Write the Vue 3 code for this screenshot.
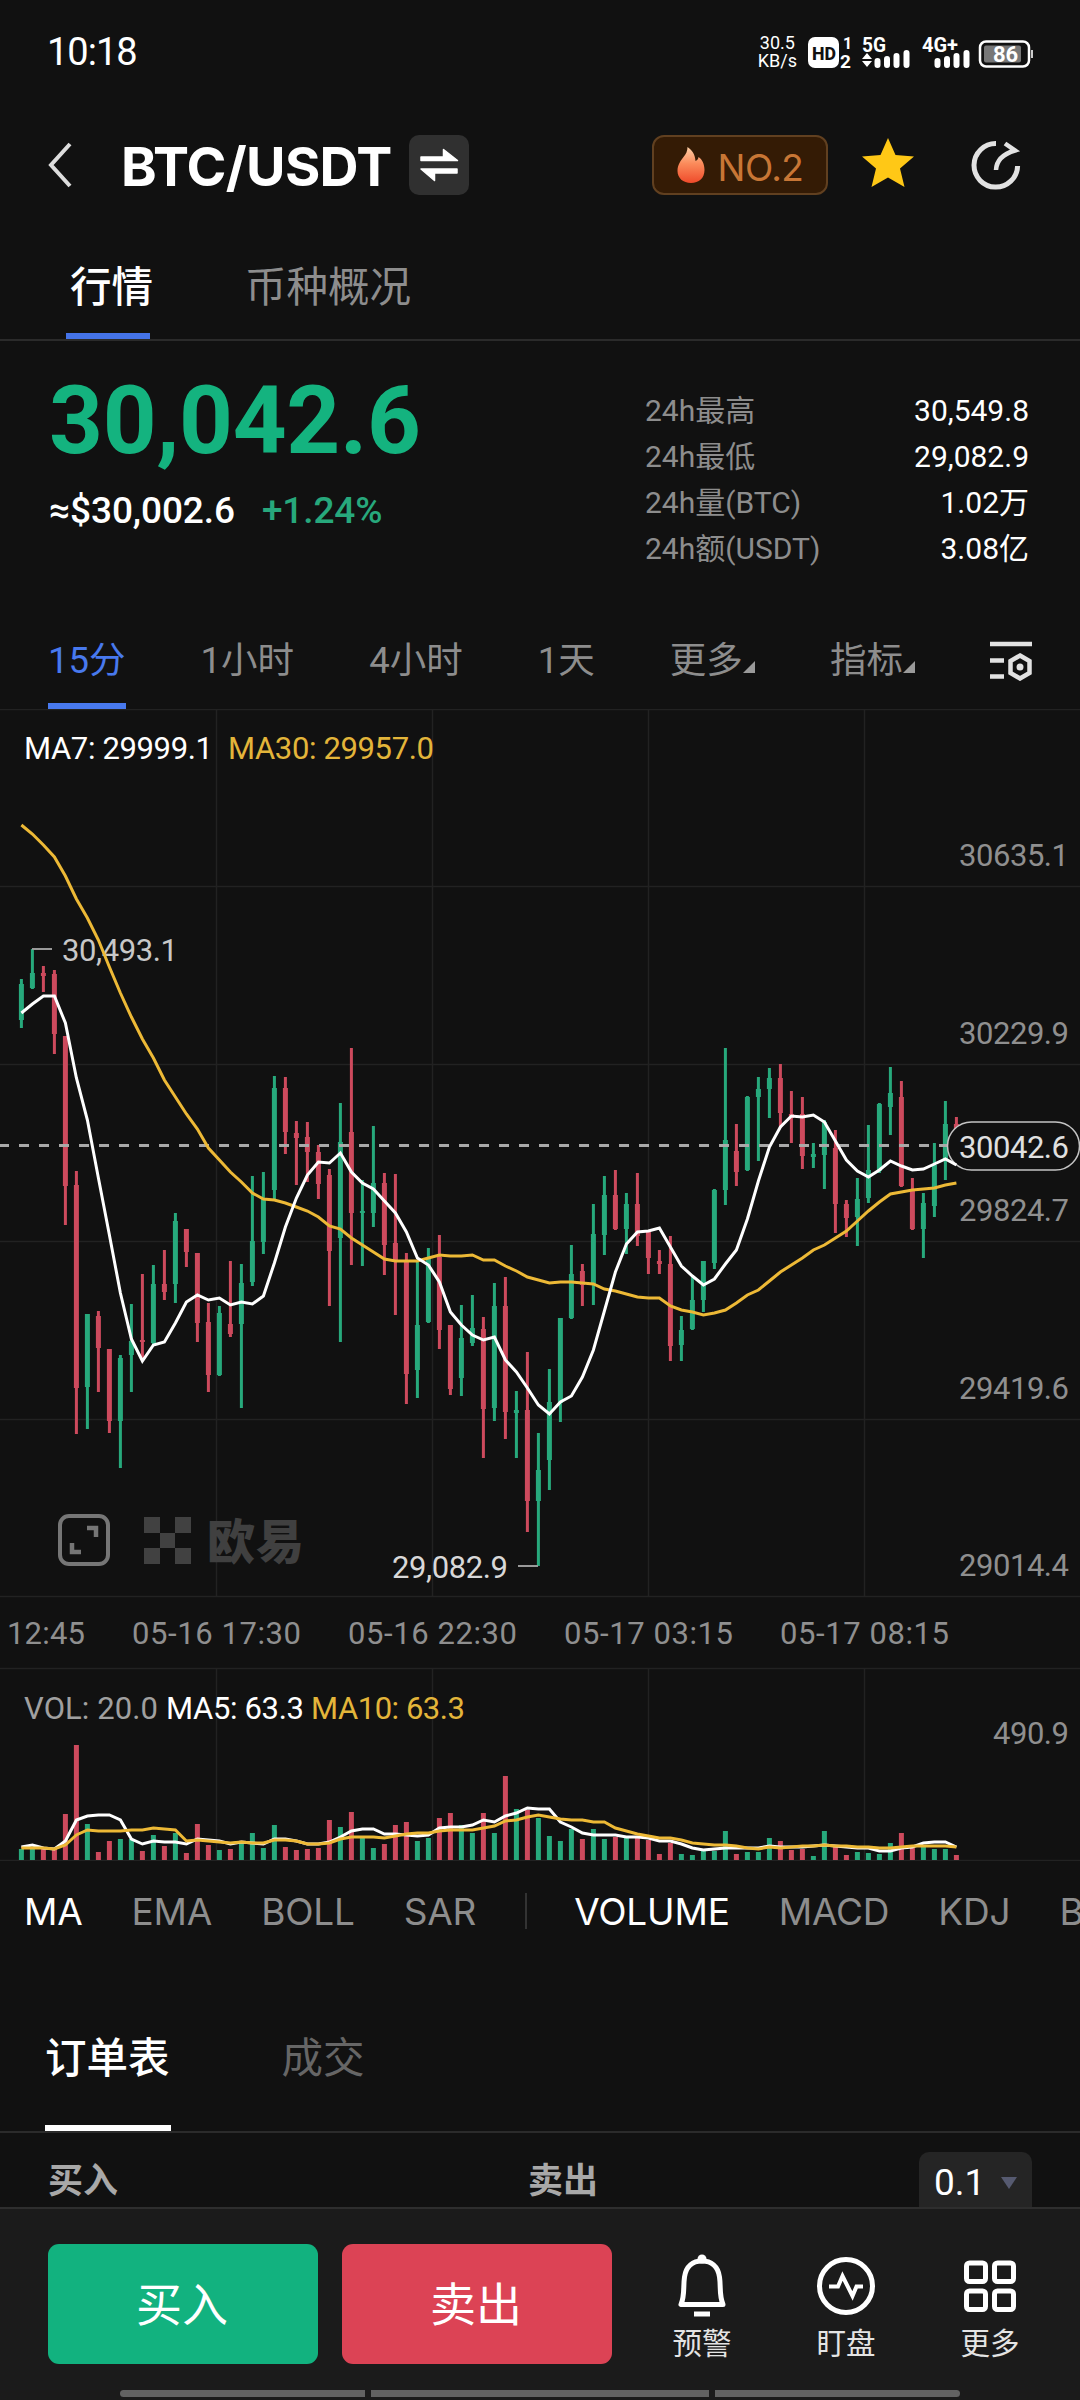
<template>
  <div class="page">
    <div class="status">
      <span class="clock">10:18</span>
      <div class="status-right">
        <div class="speed"><span>30.5</span><span>KB/s</span></div>
        <svg class="status-icons" width="234" height="36" viewBox="0 0 234 36">
          <rect x="0" y="3" width="31" height="31" rx="7" fill="#fff" />
          <text x="4" y="26" class="hd" textLength="24" lengthAdjust="spacingAndGlyphs">HD</text>
          <text x="35" y="15" class="sim" font-size="16">1</text>
          <text x="32" y="33.500" class="sim" font-size="19">2</text>
          <text x="54" y="18" class="net" textLength="24" lengthAdjust="spacingAndGlyphs">5G</text>
          <path d="M59 19l5 6h-10zM59 33l5-6h-10z" fill="#fff" />
          <path d="M69.500 31v-4M79 31v-6M88.500 31v-9M98.500 31v-12" class="bars" />
          <text x="114" y="18" class="net" textLength="36" lengthAdjust="spacingAndGlyphs">4G+</text>
          <path d="M129.500 31v-4M139 31v-6M148.500 31v-9M158.500 31v-12" class="bars" />
          <rect x="172" y="7.500" width="49" height="25" rx="6" fill="none" stroke="#fff" stroke-width="2.500" />
          <rect x="176" y="11.500" width="37" height="17" rx="2" fill="#777" />
          <rect x="223" y="16" width="2" height="8" fill="#ccc" />
          <text x="185" y="28" class="battery" textLength="25">86</text>
        </svg>
      </div>
    </div>

    <header class="header">
      <svg class="back" width="26" height="46" viewBox="0 0 26 46">
        <path d="M23 2L4 23L23 44" fill="none" stroke="#ddd" stroke-width="4" />
      </svg>
      <h1>BTC/USDT</h1>
      <div class="swap">
        <svg width="60" height="60" viewBox="0 0 60 60">
          <path
            d="M12 22H34.500V14.500L48.500 25.500H12ZM48 34H12L25.500 45.500V38H48Z"
            fill="#fff"
            stroke="#fff"
            stroke-width="1.500"
            stroke-linejoin="round"
          />
        </svg>
      </div>
      <div class="rank">
        <svg width="28" height="38" viewBox="0 0 28 38">
          <defs>
            <linearGradient id="fire" x1="0" y1="0" x2="0" y2="1">
              <stop offset="0" stop-color="#ffd0a8" />
              <stop offset="0.450" stop-color="#fb8c5c" />
              <stop offset="1" stop-color="#ef4a2a" />
            </linearGradient>
          </defs>
          <path
            d="M10.500 1C15 4 18 8 18.500 15C20.500 14 21.500 12.500 21.500 11C25 13 27.500 18 27.500 24C27.500 32 22 37 14 37C6 37 0.500 32 0.500 25C0.500 19 3.500 15 6.500 11C9 8 10.500 5 10.500 1Z"
            fill="url(#fire)"
          />
        </svg>
        <span>NO.2</span>
      </div>
      <svg class="star" width="52" height="50" viewBox="0 0 52 50">
        <path d="M26 0L33.500 17L52 18.500L38 30.500L42.500 49L26 39.500L9.500 49L14 30.500L0 18.500L18.500 17Z" fill="#ffc816" />
      </svg>
      <svg class="share" width="50" height="50" viewBox="0 0 50 50">
        <path d="M25 3.500A21.800 21.800 0 1 0 46.600 26" fill="none" stroke="#e2e2e2" stroke-width="5" />
        <path d="M25 30C25.500 20 32 14 44 10.500L34 3.500" fill="none" stroke="#e2e2e2" stroke-width="4.500" />
      </svg>
    </header>

    <nav class="tabs">
      <span class="active">行情</span>
      <span>币种概况</span>
    </nav>

    <section class="quote">
      <div>
        <div class="price">30,042.6</div>
        <div class="sub">
          <span>≈$30,002.6</span>
          <span class="change">+1.24%</span>
        </div>
      </div>
      <div class="stats">
        <div v-for="s in stats" :key="s.label" class="stat">
          <span class="label">{{ s.label }}</span>
          <span>{{ s.value }}</span>
        </div>
      </div>
    </section>

    <nav class="periods">
      <span v-for="(p, i) in periods" :key="p.name" :class="{ active: i === 0 }">
        {{ p.name }}<i v-if="p.menu" class="corner"></i>
      </span>
      <svg width="42" height="40" viewBox="0 0 42 40">
        <path d="M0 3H42M0 19.500H14M0 35.500H14" stroke="#e2e2e2" stroke-width="4.500" />
        <path d="M30 14.500L39.500 20V32L30 37.500L20.500 32V20Z" fill="none" stroke="#e2e2e2" stroke-width="4.500" />
        <circle cx="30" cy="26" r="3.500" fill="#e2e2e2" />
      </svg>
    </nav>

    <svg class="chart" width="1080" height="1152" viewBox="0 709 1080 1152">
      <g class="grid">
        <path v-for="y in gridY" :key="y" :d="`M0 ${y}H1080`" />
        <path v-for="x in gridX" :key="x" :d="`M${x} 710V1596M${x} 1669V1860`" />
      </g>

      <!-- watermark and expand button -->
      <rect x="60" y="1516" width="48" height="48" rx="9" fill="none" stroke="#767676" stroke-width="4" />
      <path d="M87 1528H96V1537M72 1543V1552H81" fill="none" stroke="#767676" stroke-width="4.500" />
      <path d="M144 1517h16v16h-16zM175 1517h16v16h-16zM160 1533h15v15h-15zM144 1548h16v16h-16zM175 1548h16v16h-16z" fill="#414141" />
      <text x="207" y="1559" class="brand" textLength="97">欧易</text>

      <g v-for="(c, i) in candles" :key="i" :fill="c[0] ? '#27a97c' : '#cd4a5d'">
        <rect :x="cx(i) - 1.5" :y="c[1]" width="3" :height="c[4] - c[1]" />
        <rect :x="cx(i) - 2.5" :y="c[2]" width="5" :height="c[3] - c[2]" />
        <rect :x="cx(i) - 2.5" :y="1860 - volumes[i]" width="5" :height="volumes[i]" />
      </g>

      <path d="M32 949H52M518 1566H538" stroke="#999" stroke-width="2" />
      <text x="62" y="960.500" fill="#c8c8c8" textLength="116">30,493.1</text>
      <text x="392" y="1577.500" fill="#d8d8d8" textLength="116">29,082.9</text>

      <path d="M-1 1145.500H950" stroke="#a9a9a9" stroke-width="3" stroke-dasharray="10 10" />
      <rect x="947.500" y="1122" width="132" height="48" rx="24" fill="#111" stroke="#c4c4c4" stroke-width="1.500" />

      <polyline :points="line(ma30)" class="ma yellow" />
      <polyline :points="line(ma7)" class="ma" />
      <polyline :points="volLine(volMa5)" class="ma" />
      <polyline :points="volLine(volMa10)" class="ma yellow" />

      <text
        v-for="t in chartTexts"
        :key="t.text"
        :x="t.x"
        :y="t.y"
        :textLength="t.w"
        :fill="t.color"
      >{{ t.text }}</text>
    </svg>

    <nav class="indicators">
      <span class="on">MA</span>
      <span>EMA</span>
      <span>BOLL</span>
      <span>SAR</span>
      <i></i>
      <span class="on">VOLUME</span>
      <span>MACD</span>
      <span>KDJ</span>
      <span>B</span>
    </nav>

    <nav class="book-tabs">
      <span class="active">订单表</span>
      <span>成交</span>
    </nav>

    <div class="book-head">
      <span>买入</span>
      <span>卖出</span>
      <div class="step">0.1<i></i></div>
    </div>

    <footer class="footer">
      <div class="actions">
        <button class="buy">买入</button>
        <button class="sell">卖出</button>
        <div class="tools">
          <div class="tool">
            <svg width="64" height="64" viewBox="0 0 64 64">
              <circle cx="32" cy="6" r="4.500" fill="#fff" />
              <path d="M11 51.500H53C49 42 51 34 49.500 24C48 13 41 8 32 8C23 8 16 13 14.500 24C13 34 15 42 11 51.500Z" class="stroke" />
              <path d="M24 61H40" class="stroke" />
            </svg>
            <span>预警</span>
          </div>
          <div class="tool">
            <svg width="64" height="64" viewBox="0 0 64 64">
              <circle cx="32" cy="33" r="26.500" class="stroke" />
              <path d="M15 33.500H24L28.500 23L38.500 43L42.500 33.500H49" class="stroke thin" />
            </svg>
            <span>盯盘</span>
          </div>
          <div class="tool">
            <svg width="64" height="64" viewBox="0 0 64 64">
              <rect x="8.500" y="10" width="19" height="18.500" rx="3" class="stroke" />
              <rect x="36.500" y="10" width="19" height="18.500" rx="3" class="stroke" />
              <rect x="8.500" y="38" width="19" height="18.500" rx="3" class="stroke" />
              <rect x="36.500" y="38" width="19" height="18.500" rx="3" class="stroke" />
            </svg>
            <span>更多</span>
          </div>
        </div>
      </div>
      <div class="gesture"><i></i><i></i><i></i></div>
    </footer>
  </div>
</template>

<script setup>
const stats = [
  { label: "24h最高", value: "30,549.8" },
  { label: "24h最低", value: "29,082.9" },
  { label: "24h量(BTC)", value: "1.02万" },
  { label: "24h额(USDT)", value: "3.08亿" },
];

const periods = [
  { name: "15分" },
  { name: "1小时" },
  { name: "4小时" },
  { name: "1天" },
  { name: "更多", menu: true },
  { name: "指标", menu: true },
];

const gridY = [709.5, 886.5, 1064.5, 1241.5, 1419.5, 1596.5, 1668.5, 1860.5];
const gridX = [216.5, 432.5, 648.5, 864.5];

// up flag, high, body top, body bottom, low
const candles = [
  [1, 979, 984, 1020, 1028], [1, 949, 973, 988, 989], [0, 966, 973, 976, 992], [0, 970, 974, 1034, 1054],
  [0, 1036, 1036, 1186, 1225], [0, 1171, 1185, 1388, 1434], [1, 1314, 1314, 1387, 1429], [0, 1311, 1316, 1348, 1392],
  [0, 1349, 1349, 1421, 1433], [1, 1355, 1358, 1421, 1468], [1, 1304, 1341, 1355, 1392], [0, 1274, 1340, 1342, 1360],
  [1, 1265, 1284, 1343, 1345], [0, 1250, 1284, 1292, 1300], [1, 1213, 1221, 1284, 1303], [0, 1229, 1229, 1252, 1267],
  [0, 1253, 1253, 1323, 1342], [0, 1303, 1322, 1375, 1392], [1, 1306, 1313, 1375, 1376], [0, 1261, 1324, 1334, 1337],
  [1, 1264, 1283, 1324, 1408], [1, 1176, 1241, 1282, 1286], [1, 1172, 1199, 1242, 1254], [1, 1076, 1088, 1190, 1199],
  [0, 1077, 1088, 1132, 1154], [0, 1121, 1133, 1138, 1185], [0, 1122, 1137, 1152, 1182], [0, 1145, 1152, 1184, 1199],
  [0, 1169, 1175, 1251, 1306], [1, 1103, 1142, 1238, 1342], [0, 1048, 1132, 1213, 1265], [1, 1180, 1211, 1213, 1266],
  [1, 1126, 1183, 1213, 1227], [0, 1173, 1183, 1245, 1275], [0, 1174, 1243, 1261, 1315], [0, 1253, 1260, 1374, 1404],
  [1, 1260, 1325, 1370, 1398], [1, 1248, 1259, 1322, 1323], [0, 1235, 1257, 1330, 1349], [0, 1325, 1325, 1389, 1395],
  [1, 1305, 1338, 1378, 1396], [1, 1295, 1328, 1343, 1346], [0, 1317, 1329, 1409, 1458], [1, 1283, 1306, 1408, 1421],
  [0, 1277, 1306, 1412, 1439], [1, 1391, 1410, 1413, 1458], [0, 1352, 1410, 1501, 1532], [1, 1433, 1470, 1501, 1566],
  [1, 1369, 1402, 1460, 1490], [1, 1318, 1318, 1403, 1422], [1, 1245, 1274, 1318, 1319], [0, 1264, 1271, 1285, 1306],
  [1, 1204, 1234, 1284, 1305], [1, 1176, 1195, 1235, 1255], [0, 1170, 1195, 1229, 1230], [1, 1193, 1204, 1229, 1254],
  [0, 1173, 1204, 1236, 1246], [0, 1232, 1232, 1258, 1274], [0, 1250, 1261, 1264, 1274], [0, 1236, 1264, 1346, 1361],
  [1, 1316, 1330, 1345, 1361], [1, 1275, 1300, 1329, 1330], [1, 1261, 1261, 1300, 1312], [1, 1189, 1190, 1263, 1269],
  [1, 1048, 1140, 1190, 1205], [0, 1124, 1151, 1172, 1186], [1, 1096, 1097, 1170, 1171], [1, 1077, 1089, 1097, 1161],
  [1, 1068, 1078, 1089, 1118], [0, 1064, 1078, 1113, 1128], [0, 1091, 1114, 1118, 1143], [0, 1097, 1114, 1156, 1169],
  [1, 1143, 1154, 1157, 1168], [1, 1120, 1122, 1155, 1189], [0, 1130, 1148, 1204, 1233], [0, 1200, 1204, 1218, 1237],
  [1, 1178, 1199, 1217, 1246], [1, 1125, 1170, 1198, 1203], [1, 1103, 1104, 1171, 1173], [1, 1067, 1093, 1107, 1135],
  [0, 1081, 1097, 1186, 1187], [0, 1178, 1190, 1229, 1230], [1, 1193, 1203, 1229, 1258], [1, 1143, 1165, 1206, 1217],
  [1, 1101, 1124, 1160, 1180], [0, 1117, 1124, 1140, 1142],
];

const ma7 = [
  1013, 1004, 996, 996, 1023, 1078, 1120, 1178, 1235, 1293, 1339, 1361, 1345, 1342, 1323, 1302, 1295, 1300, 1298, 1305,
  1302, 1304, 1296, 1263, 1227, 1198, 1175, 1162, 1163, 1153, 1172, 1183, 1189, 1201, 1213, 1232, 1258, 1265, 1282, 1312,
  1325, 1335, 1340, 1337, 1360, 1372, 1388, 1405, 1414, 1402, 1396, 1377, 1350, 1311, 1272, 1244, 1232, 1231, 1228, 1247,
  1266, 1276, 1285, 1279, 1264, 1250, 1219, 1181, 1147, 1127, 1116, 1117, 1115, 1122, 1141, 1160, 1171, 1177, 1170, 1161,
  1166, 1170, 1169, 1164, 1159, 1165,
];

const ma30 = [
  825, 834, 845, 857, 876, 899, 918, 940, 967, 993, 1017, 1039, 1058, 1080, 1097, 1114, 1129, 1148, 1160, 1172,
  1182, 1193, 1199, 1200, 1203, 1207, 1211, 1217, 1226, 1229, 1238, 1245, 1252, 1259, 1261, 1261, 1261, 1258, 1255, 1256,
  1256, 1255, 1260, 1260, 1266, 1271, 1277, 1280, 1283, 1282, 1282, 1283, 1284, 1289, 1291, 1294, 1297, 1298, 1298, 1306,
  1310, 1312, 1315, 1313, 1310, 1303, 1295, 1290, 1281, 1272, 1265, 1258, 1250, 1245, 1238, 1231, 1221, 1211, 1202, 1194,
  1192, 1190, 1189, 1188, 1185, 1183,
];

const volumes = [
  11, 11, 12, 11, 46, 115, 36, 8, 19, 21, 21, 9, 25, 14, 27, 7, 36, 15, 10, 11,
  17, 27, 12, 35, 13, 10, 11, 12, 40, 33, 48, 22, 12, 16, 35, 38, 19, 22, 42, 47,
  35, 27, 47, 27, 84, 51, 50, 42, 24, 19, 31, 21, 31, 21, 23, 22, 22, 20, 6, 17,
  6, 5, 10, 9, 29, 6, 8, 8, 22, 19, 10, 11, 4, 29, 14, 5, 8, 7, 6, 17,
  27, 12, 13, 11, 11, 5,
];

const volMa5 = [
  13, 15, 12, 11, 19, 40, 44, 45, 45, 40, 21, 16, 19, 18, 18, 16, 21, 20, 19, 16,
  18, 17, 16, 21, 21, 19, 16, 16, 18, 23, 29, 31, 31, 26, 26, 25, 24, 25, 32, 33,
  33, 35, 40, 38, 44, 47, 52, 51, 51, 38, 33, 27, 25, 25, 25, 23, 23, 22, 19, 19,
  16, 12, 10, 11, 12, 12, 12, 12, 14, 13, 13, 13, 14, 15, 14, 13, 12, 12, 9, 9,
  12, 13, 17, 18, 18, 13,
];

const volMa10 = [
  12, 12, 12, 11, 15, 25, 30, 29, 29, 29, 30, 30, 32, 31, 30, 19, 20, 19, 18, 17,
  18, 17, 17, 20, 20, 19, 16, 16, 17, 21, 23, 23, 23, 22, 24, 26, 27, 27, 29, 30,
  30, 30, 32, 34, 39, 40, 43, 45, 43, 41, 40, 40, 38, 38, 32, 29, 26, 24, 22, 22,
  20, 17, 16, 15, 15, 14, 12, 11, 13, 12, 13, 14, 14, 15, 14, 14, 13, 13, 12, 12,
  13, 14, 14, 14, 14, 13,
];

const gray = "#8f8f8f";
const gold = "#e3b53a";
const chartTexts = [
  { text: "MA7: 29999.1", x: 24, y: 759, w: 189, color: "#fff" },
  { text: "MA30: 29957.0", x: 228, y: 759, w: 206, color: gold },
  { text: "30635.1", x: 959, y: 866, w: 110, color: gray },
  { text: "30229.9", x: 959, y: 1044, w: 110, color: gray },
  { text: "30042.6", x: 959, y: 1158, w: 110, color: "#e0e0e0" },
  { text: "29824.7", x: 959, y: 1221, w: 110, color: gray },
  { text: "29419.6", x: 959, y: 1399, w: 110, color: gray },
  { text: "29014.4", x: 959, y: 1576, w: 110, color: gray },
  { text: "12:45", x: 7, y: 1644, w: 78, color: gray },
  { text: "05-16 17:30", x: 132, y: 1644, w: 169, color: gray },
  { text: "05-16 22:30", x: 348, y: 1644, w: 169, color: gray },
  { text: "05-17 03:15", x: 564, y: 1644, w: 169, color: gray },
  { text: "05-17 08:15", x: 780, y: 1644, w: 169, color: gray },
  { text: "VOL: 20.0", x: 24, y: 1719, w: 134, color: "#a0a0a0" },
  { text: "MA5: 63.3", x: 166, y: 1719, w: 138, color: "#fff" },
  { text: "MA10: 63.3", x: 311, y: 1719, w: 154, color: gold },
  { text: "490.9", x: 993, y: 1744, w: 76, color: gray },
];

const cx = (i) => 21.4 + i * 11;
const line = (values) => values.map((y, i) => `${cx(i)},${y}`).join(" ");
const volLine = (values) => values.map((v, i) => `${cx(i)},${1860 - v}`).join(" ");
</script>

<style>
body {
  margin: 0;
  background: #111;
}
</style>

<style scoped>
.page {
  width: 1080px;
  height: 2400px;
  overflow: hidden;
  display: flex;
  flex-direction: column;
  background: #111;
  color: #fff;
  font-family: Roboto, "Noto Sans CJK SC", sans-serif;
}

.page > * {
  flex-shrink: 0;
  box-sizing: border-box;
}

.status {
  height: 104px;
  padding: 0 38px 0 47px;
  display: flex;
  align-items: center;
  justify-content: space-between;
}

.clock {
  font-size: 38px;
  font-weight: 400;
  letter-spacing: -1px;
}

.status-right {
  display: flex;
  align-items: center;
  gap: 11px;
}

.speed {
  display: flex;
  flex-direction: column;
  align-items: center;
  font-size: 18px;
  line-height: 18px;
  font-weight: 400;
}

.status-icons text {
  fill: #fff;
  font-weight: 700;
}

.status-icons .hd {
  fill: #111;
  font-size: 19px;
  font-weight: 800;
}

.net {
  font-size: 21px;
}

.battery {
  font-size: 22px;
}

.bars {
  stroke: #fff;
  stroke-width: 6;
  stroke-linecap: round;
}

.header {
  height: 122px;
  padding: 0 59px 0 47px;
  display: flex;
  align-items: center;
}

h1 {
  margin: 2px 0 0 48px;
  width: 270px;
  font-family: Inter, sans-serif;
  font-size: 54px;
  font-weight: 700;
  letter-spacing: -0.7px;
  white-space: nowrap;
}

.swap {
  margin-left: 18px;
  width: 60px;
  height: 60px;
  border-radius: 10px;
  background: #303030;
}

.rank {
  margin-left: auto;
  box-sizing: border-box;
  width: 176px;
  height: 60px;
  border: 2px solid #614020;
  border-radius: 12px;
  background: #341b05;
  display: flex;
  align-items: center;
  justify-content: center;
  gap: 13px;
  color: #c87635;
  font-family: Inter, sans-serif;
  font-size: 37px;
  letter-spacing: -0.5px;
}

.rank span {
  position: relative;
  top: 2px;
}

.star {
  margin: 0 57px 4px 34px;
}

.tabs {
  height: 115px;
  padding-left: 66px;
  display: flex;
  gap: 90px;
  border-bottom: 2px solid #2b2b2b;
  font-size: 41.5px;
  line-height: 123px;
  color: #8d8d8d;
}

.tabs span {
  padding: 0 4px 0 3px;
  height: 107px;
}

.tabs .active {
  width: 80px;
  padding: 0 0 0 4px;
  white-space: nowrap;
  color: #fff;
  font-weight: 500;
  border-bottom: 6px solid #4473e8;
}

.tabs .active + span {
  padding-left: 5px;
}

.quote {
  height: 269px;
  padding: 30px 51px 0 49px;
  display: flex;
  justify-content: space-between;
}

.price {
  font-size: 94px;
  line-height: 100px;
  font-weight: 700;
  letter-spacing: -0.3px;
  color: #14b37f;
}

.sub {
  display: flex;
  gap: 27px;
  margin-top: 14px;
  font-size: 37px;
  line-height: 51px;
  font-weight: 500;
  letter-spacing: -0.1px;
}

.change {
  color: #27a87c;
  font-weight: 500;
}

.stats {
  width: 384px;
  padding-top: 17px;
  font-size: 30px;
  line-height: 46px;
}

.stat {
  display: flex;
  justify-content: space-between;
  height: 46px;
}

.stat .label {
  color: #8d8d8d;
}

.periods {
  height: 99px;
  padding: 0 48px;
  display: flex;
  align-items: flex-start;
  justify-content: space-between;
  font-size: 36.5px;
  line-height: 102px;
  color: #8d8d8d;
}

.periods span {
  height: 93px;
}

.periods svg {
  margin-top: 31px;
}

.periods .active {
  color: #4879ee;
  border-bottom: 6px solid #4879ee;
}

.corner {
  display: inline-block;
  border-left: 12px solid transparent;
  border-bottom: 12px solid #9a9a9a;
}

.chart {
  display: block;
}

.chart text {
  font-size: 31px;
}

.chart .brand {
  font-size: 48px;
  font-weight: 900;
  fill: #404040;
}

.grid {
  stroke: #222;
  stroke-width: 1.5;
}

.ma {
  fill: none;
  stroke: #fff;
  stroke-width: 3;
}

.yellow {
  stroke: #edb936;
}

.indicators {
  height: 104px;
  padding: 0 0 4px 24px;
  display: flex;
  align-items: center;
  gap: 49px;
  white-space: nowrap;
  overflow: hidden;
  font-family: Inter, sans-serif;
  font-size: 37px;
  letter-spacing: -0.2px;
  color: #8d8d8d;
}

.indicators .on {
  color: #fff;
}

.indicators i {
  width: 2px;
  height: 36px;
  margin-right: -2px;
  background: #333;
  flex-shrink: 0;
}

.book-tabs {
  height: 168px;
  padding: 35px 0 0 45px;
  display: flex;
  gap: 111px;
  border-bottom: 2px solid #2b2b2b;
  font-size: 41.5px;
  line-height: 117px;
  color: #666;
}

.book-tabs span {
  height: 125px;
}

.book-tabs .active {
  padding: 0 1px 0 0;
  color: #fff;
  font-weight: 500;
  border-bottom: 6px solid #fff;
}

.book-head {
  height: 74px;
  padding: 0 48px;
  overflow: hidden;
  display: flex;
  font-size: 35px;
  line-height: 98px;
  font-weight: 700;
  color: #a8a8a8;
}

.book-head > span {
  width: 480px;
}

.book-head > span + span {
  width: 300px;
}

.step {
  margin: 19px 0 0 auto;
  width: 113px;
  height: 70px;
  border-radius: 10px;
  background: #252525;
  display: flex;
  align-items: center;
  justify-content: space-between;
  box-sizing: border-box;
  padding: 0 15px 8px;
  flex-shrink: 0;
  font-size: 37px;
  font-weight: 400;
  color: #fff;
}

.step i {
  border: 8.5px solid transparent;
  border-top: 12px solid #565a70;
  border-bottom: 0;
}

.footer {
  height: 194px;
  background: #1b1b1b;
  border-top: 2px solid #2e2e2e;
}

.actions {
  display: flex;
  padding: 35px 26px 0 48px;
}

button {
  width: 270px;
  height: 120px;
  margin-right: 24px;
  padding: 0 2px 7px 0;
  border: 0;
  border-radius: 11px;
  color: #fff;
  font-family: inherit;
  font-size: 46px;
}

.buy {
  background: #12b27f;
}

.sell {
  background: #dc4355;
}

.tools {
  flex: 1;
  display: flex;
  justify-content: space-between;
  padding: 9px 10px 0 12px;
}

.tool {
  width: 108px;
  display: flex;
  flex-direction: column;
  align-items: center;
  font-size: 29.5px;
  line-height: 42px;
  color: #e4e4e4;
}

.tool span {
  margin-top: 6px;
}

.stroke {
  fill: none;
  stroke: #fff;
  stroke-width: 5;
  stroke-linejoin: round;
}

.thin {
  stroke-width: 4;
  stroke-linejoin: miter;
}

.gesture {
  margin: 25px 120px 0;
  display: grid;
  grid-template-columns: 245px 338px 245px;
  gap: 6px;
}

.gesture i {
  height: 7px;
  background: #626262;
}

.gesture i:first-child {
  border-radius: 4px 0 0 4px;
}

.gesture i:last-child {
  border-radius: 0 4px 4px 0;
}
</style>
